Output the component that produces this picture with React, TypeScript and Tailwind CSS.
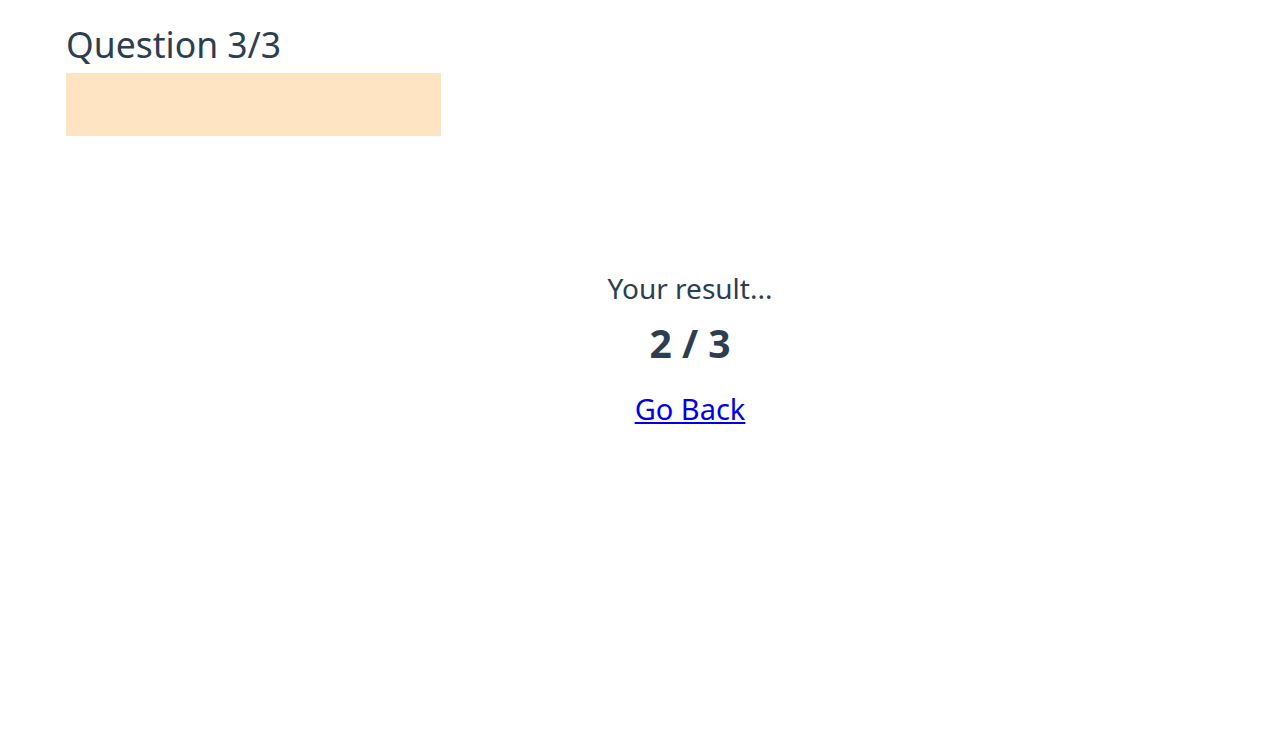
export default function App() {
  return (
    <div className="min-h-screen bg-white px-[66px] pt-[22px] text-[#2c3e50] font-['Segoe_UI','Noto_Sans',sans-serif]">
      <h1 className="text-[35.5px] leading-[44px] font-normal">Question 3/3</h1>
      <div className="mt-[7px] h-[63px] w-[375px] bg-[#ffe4c4]" />
      <div className="ml-[113px] mt-[134px] flex flex-col items-center">
        <p className="text-[28px] leading-[36px]">Your result...</p>
        <p className="mt-[15px] text-[39px] font-bold leading-[44px]">2 / 3</p>
        <a href="#" className="mt-[26px] text-[29px] leading-[36px] text-[#0000ee] underline">
          Go Back
        </a>
      </div>
    </div>
  );
}
